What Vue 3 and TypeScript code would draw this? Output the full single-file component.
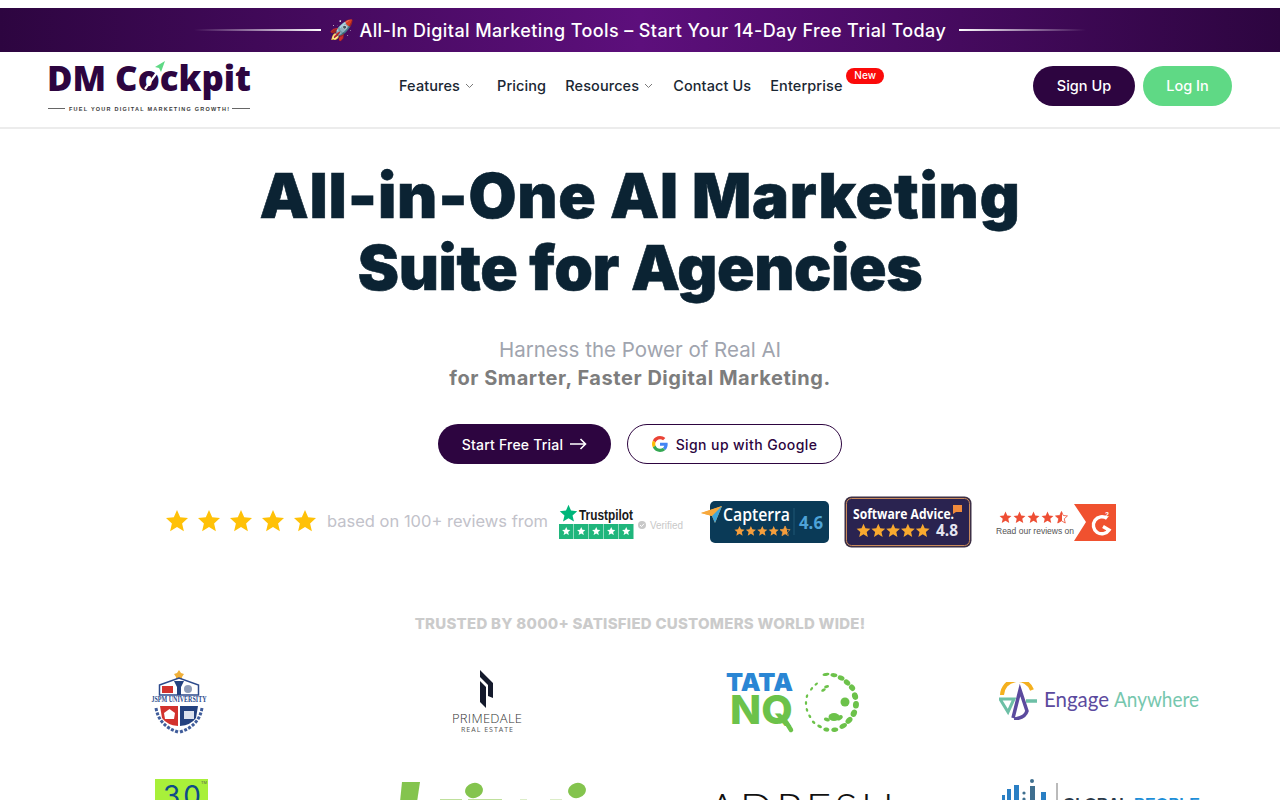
<script setup lang="ts">
interface NavItem {
  label: string
  caret?: boolean
  badge?: string
}

interface Blob {
  a: number
  r: number
  rx: number
  ry: number
}

const navItems: NavItem[] = [
  { label: 'Features', caret: true },
  { label: 'Pricing' },
  { label: 'Resources', caret: true },
  { label: 'Contact Us' },
  { label: 'Enterprise', badge: 'New' },
]

const star = '12,1 15.2,8.3 23,9.1 17.1,14.4 18.9,22.2 12,18.1 5.1,22.2 6.9,14.4 1,9.1 8.8,8.3'
const heroStars = [0, 1, 2, 3, 4]

// spots of the Tata NQ ball, angle from the top, clockwise
const ballBlobs: Blob[] = [
  { a: -10, r: 29, rx: 3.5, ry: 1.5 },
  { a: 6, r: 28, rx: 3.5, ry: 2 },
  { a: 22, r: 27, rx: 3.5, ry: 2.4 },
  { a: 38, r: 26, rx: 3.5, ry: 2.6 },
  { a: 54, r: 26, rx: 3.5, ry: 2.8 },
  { a: 74, r: 25, rx: 3.8, ry: 3 },
  { a: 94, r: 25, rx: 3.8, ry: 3 },
  { a: 114, r: 25, rx: 3.8, ry: 3 },
  { a: 134, r: 25, rx: 4, ry: 2.8 },
  { a: 152, r: 26, rx: 4, ry: 2.4 },
  { a: 172, r: 27, rx: 3.5, ry: 2.2 },
  { a: 190, r: 27, rx: 3, ry: 2 },
  { a: 206, r: 26, rx: 2.5, ry: 1.5 },
  { a: 222, r: 26, rx: 2, ry: 1.3 },
  { a: 238, r: 25, rx: 2, ry: 1.2 },
  { a: 254, r: 25, rx: 2, ry: 1.2 },
  { a: 270, r: 25, rx: 2, ry: 1.2 },
  { a: 286, r: 25, rx: 2, ry: 1.2 },
  { a: 306, r: 24, rx: 2, ry: 1.2 },
  { a: 322, r: 24, rx: 2, ry: 1.2 },
  { a: 150, r: 17, rx: 3.5, ry: 2.2 },
  { a: 194, r: 17, rx: 3, ry: 1.8 },
  { a: 330, r: 15, rx: 2.5, ry: 1.4 },
  { a: 345, r: 17, rx: 2.5, ry: 1.4 },
]

function blobTransform(b: Blob) {
  return `rotate(${b.a} 105 31) translate(105 ${31 - b.r})`
}

function starAt(x: number, y: number, size: number) {
  const s = size / 24
  return `translate(${x} ${y}) scale(${s})`
}
</script>

<template>
  <div class="page">
    <div class="promo">
      <span class="promo-line left"></span>
      <span class="promo-text"><span class="rocket">🚀</span> All-In Digital Marketing Tools – Start Your 14-Day Free Trial Today</span>
      <span class="promo-line right"></span>
    </div>

    <header class="header">
      <svg class="logo" width="204" height="56" viewBox="0 0 204 56">
        <text x="0" y="33" class="logo-word" textLength="204" lengthAdjust="spacingAndGlyphs">DM Cockpit</text>
        <path d="M98 31 L111 13" stroke="#fff" stroke-width="2.2" />
        <path d="M108 9 L118 3 L114 14 L112 10 Z" fill="#5fd985" />
        <path d="M1 50.5 H18 M185 50.5 H203" stroke="#666" stroke-width="1" />
        <text x="22" y="52.5" class="logo-tag" textLength="160" lengthAdjust="spacing">FUEL YOUR DIGITAL MARKETING GROWTH!</text>
      </svg>

      <nav class="nav">
        <a v-for="item in navItems" :key="item.label" class="nav-link">
          {{ item.label }}
          <svg v-if="item.caret" class="caret" width="9" height="6" viewBox="0 0 9 6">
            <path d="M1 1 L4.5 4.5 L8 1" fill="none" stroke="#7a7a7a" stroke-width="1" />
          </svg>
          <span v-if="item.badge" class="badge">{{ item.badge }}</span>
        </a>
      </nav>

      <div class="auth">
        <button class="btn-signup">Sign Up</button>
        <button class="btn-login">Log In</button>
      </div>
    </header>

    <main class="hero">
      <h1><span class="line-one">All-in-One AI Marketing</span><br /><span class="line-two">Suite for Agencies</span></h1>
      <p class="sub-light">Harness the Power of Real AI</p>
      <p class="sub-bold">for Smarter, Faster Digital Marketing.</p>

      <div class="cta">
        <button class="btn-trial">
          Start Free Trial
          <svg width="17" height="12" viewBox="0 0 17 12">
            <path d="M0 6 H15.5 M10.5 1 L15.5 6 L10.5 11" fill="none" stroke="#fff" stroke-width="1.6" />
          </svg>
        </button>
        <button class="btn-google">
          <svg width="16" height="16" viewBox="0 0 48 48">
            <path fill="#EA4335" d="M24 9.5c3.5 0 6.700 1.200 9.200 3.600l6.900-6.900C35.900 2.400 30.500 0 24 0 14.600 0 6.500 5.400 2.600 13.200l8 6.200C12.500 13.600 17.800 9.500 24 9.500z" />
            <path fill="#4285F4" d="M47 24.500c0-1.600-.1-3.100-.4-4.500H24v9h12.900c-.6 3-2.200 5.500-4.700 7.200l7.700 6C44.400 37.500 47 31.600 47 24.500z" />
            <path fill="#FBBC05" d="M10.600 28.600c-.5-1.400-.8-3-.8-4.600s.3-3.200.8-4.600l-8-6.200C.9 16.500 0 20.100 0 24s.9 7.500 2.600 10.800l8-6.200z" />
            <path fill="#34A853" d="M24 48c6.500 0 11.900-2.100 15.900-5.800l-7.700-6c-2.200 1.500-4.900 2.300-8.200 2.300-6.200 0-11.500-4.100-13.400-9.900l-8 6.200C6.500 42.600 14.600 48 24 48z" />
          </svg>
          Sign up with Google
        </button>
      </div>

      <div class="reviews">
        <div class="hero-stars">
          <svg v-for="i in heroStars" :key="i" width="24" height="24" viewBox="0 0 24 24">
            <polygon :points="star" fill="#ffc107" />
          </svg>
        </div>
        <span class="reviews-text">based on 100+ reviews from</span>

        <svg class="trustpilot" width="126" height="36" viewBox="0 0 126 36">
          <polygon :points="star" :transform="starAt(1, 0, 19)" fill="#00b67a" />
          <text x="21" y="15.500" class="tp-word" textLength="54" lengthAdjust="spacingAndGlyphs">Trustpilot</text>
          <g v-for="i in heroStars" :key="i">
            <rect :x="1 + i * 15" y="20" width="14.500" height="15" fill="#1fb67c" />
            <polygon :points="star" :transform="starAt(i * 15 + 3.700, 22.700, 9)" fill="#fff" />
          </g>
          <circle cx="84" cy="21" r="4" fill="#c8c8c8" />
          <path d="M82 21 L83.500 22.500 L86 19.800" fill="none" stroke="#fff" stroke-width="1" />
          <text x="92" y="24.500" class="tp-verified" textLength="33" lengthAdjust="spacingAndGlyphs">Verified</text>
        </svg>

        <svg class="capterra" width="128" height="42" viewBox="0 0 128 42">
          <defs>
            <linearGradient id="cap-half">
              <stop offset="70%" stop-color="#f59e3c" />
              <stop offset="70%" stop-color="#0a3a57" />
            </linearGradient>
            <linearGradient id="g2-half">
              <stop offset="55%" stop-color="#ee4e34" />
              <stop offset="55%" stop-color="#fff" />
            </linearGradient>
          </defs>
          <rect x="9" y="0" width="119" height="42" rx="5" fill="#0a3a57" />
          <polygon points="0,12 21,5 14,22 11,15" fill="#f7a83c" />
          <polygon points="0,12 21,5 11,15" fill="#f7a83c" />
          <polygon points="21,5 14,22 11,15" fill="#3ea6dc" />
          <text x="22" y="20" class="cap-word" textLength="67" lengthAdjust="spacingAndGlyphs">Capterra</text>
          <polygon
            v-for="i in heroStars"
            :key="i"
            :points="star"
            :transform="starAt(33 + i * 11.400, 24.500, 11)"
            :fill="i === 4 ? 'url(#cap-half)' : '#f59e3c'"
            :stroke="i === 4 ? '#f59e3c' : 'none'"
            :stroke-width="i === 4 ? 1.5 : 0"
          />
          <path d="M93 7 V34" stroke="#1f5675" stroke-width="1" />
          <text x="98" y="28" class="cap-score" textLength="24" lengthAdjust="spacingAndGlyphs">4.6</text>
        </svg>

        <svg class="advice" width="128" height="52" viewBox="0 0 128 52">
          <rect x="0.500" y="0.500" width="127" height="51" rx="7" fill="#3c2f45" />
          <rect x="2.500" y="2.500" width="123" height="47" rx="5" fill="#2a2350" stroke="#c98a5c" stroke-width="1" />
          <text x="9" y="23" class="sa-word" textLength="101" lengthAdjust="spacingAndGlyphs">Software Advice.</text>
          <path d="M109 9 H118 V16 H112 L109 18 Z" fill="#f08a3c" />
          <polygon v-for="i in heroStars" :key="i" :points="star" :transform="starAt(12 + i * 14.800, 27, 15)" fill="#f9a92f" />
          <text x="92" y="40" class="sa-score" textLength="22" lengthAdjust="spacingAndGlyphs">4.8</text>
        </svg>

        <svg class="g2" width="121" height="37" viewBox="0 0 121 37">
          <polygon
            v-for="i in heroStars"
            :key="i"
            :points="star"
            :transform="starAt(4 + i * 14, 7, 13)"
            :fill="i === 4 ? 'url(#g2-half)' : '#ee4e34'"
            :stroke="i === 4 ? '#ee4e34' : 'none'"
            :stroke-width="i === 4 ? 1.5 : 0"
          />
          <text x="1" y="29.500" class="g2-text" textLength="78" lengthAdjust="spacingAndGlyphs">Read our reviews on</text>
          <polygon points="79,0 121,0 121,37 79,37 91,18" fill="#f0512f" />
          <path d="M112 14.500 A8.500 8.500 0 1 0 114 26 L108 22.500" fill="none" stroke="#fff" stroke-width="3.400" />
          <text x="110" y="13" class="g2-two">2</text>
        </svg>
      </div>

      <p class="trusted">TRUSTED BY 8000+ SATISFIED CUSTOMERS WORLD WIDE!</p>

      <div class="clients">
        <svg class="client" width="56" height="64" viewBox="0 0 56 64">
          <polygon points="28,0 30,3 33,4 31,7 31,11 25,11 25,7 23,4 26,3" fill="#f0b03a" />
          <path d="M8.500 15 L28 8 L47.500 15 V25 H8.500 Z" fill="#fff" stroke="#2c4a8c" stroke-width="1.500" />
          <rect x="11" y="16" width="11" height="7" fill="#d2322d" />
          <circle cx="37" cy="19" r="4" fill="#8e9cb8" />
          <polygon points="23,11 33,11 30,17 30,25 26,25 26,17" fill="#24427f" />
          <text x="0.500" y="31.500" class="jspm" textLength="55" lengthAdjust="spacingAndGlyphs">JSPM UNIVERSITY</text>
          <path d="M9 36 H27 V56 Q16 55 11 48 Z" fill="#d2322d" />
          <path d="M29 36 H47 L45 48 Q40 55 29 56 Z" fill="#24427f" />
          <polygon points="13,43 18.500,39 24,43 23,49 14,49" fill="#fff" />
          <rect x="33" y="41" width="10" height="8" fill="#dde3ef" />
          <path d="M5 38 Q8 56 27 62 M51 38 Q48 56 29 62" fill="none" stroke="#3f5c9a" stroke-width="3" stroke-dasharray="3 1.500" />
        </svg>

        <svg class="client primedale" width="72" height="64" viewBox="0 0 72 64">
          <polygon points="29,0 42,13 42,28 37,26 37,15 29,7" fill="#141a2c" />
          <polygon points="29,11 35,17 35,38 29,32" fill="#141a2c" />
          <text x="1" y="53" class="prime" textLength="70" lengthAdjust="spacing">PRIMEDALE</text>
          <text x="10" y="62" class="prime-sub" textLength="52" lengthAdjust="spacing">REAL ESTATE</text>
        </svg>

        <svg class="client tata-logo" width="134" height="62" viewBox="0 0 134 62">
          <text x="0" y="19" class="tata" textLength="67" lengthAdjust="spacingAndGlyphs">TATA</text>
          <text x="4" y="52" class="nq" textLength="63" lengthAdjust="spacingAndGlyphs">NQ</text>
          <path d="M60 50 L65 58" stroke="#6cc24a" stroke-width="4.500" stroke-linecap="round" />
          <ellipse
            v-for="(b, i) in ballBlobs"
            :key="i"
            :transform="blobTransform(b)"
            :rx="b.rx"
            :ry="b.ry"
            fill="#6cc24a"
          />
          <circle cx="119" cy="30" r="4.500" fill="#6cc24a" />
          <ellipse cx="108" cy="45" rx="5.500" ry="4" fill="#6cc24a" />
        </svg>

        <svg class="client engage-logo" width="201" height="38" viewBox="0 0 201 38">
          <path d="M3 13 A15.500 15.500 0 0 1 33 8" fill="none" stroke="#f4b01f" stroke-width="4" />
          <path d="M14 36 L21 8 L28 29 Q26 36 15 37" fill="none" stroke="#5b4a9e" stroke-width="3.500" />
          <path d="M1 17 H15 L9 30 Z" fill="none" stroke="#6dbfa6" stroke-width="3" />
          <path d="M27 19 H38" stroke="#6dbfa6" stroke-width="3.500" />
          <text x="45" y="25" class="engage" textLength="65" lengthAdjust="spacingAndGlyphs">Engage</text>
          <text x="115" y="25" class="anywhere" textLength="85" lengthAdjust="spacingAndGlyphs">Anywhere</text>
        </svg>

        <svg class="client thirty-logo" width="54" height="32" viewBox="0 0 54 32">
          <rect x="0" y="0" width="53" height="32" fill="#a8f03a" />
          <text x="8" y="27" class="thirty">30</text>
          <text x="46" y="5" class="tm">TM</text>
        </svg>

        <svg class="client lime-logo" width="192" height="20" viewBox="0 0 192 20">
          <polygon points="4,0 22,0 19,20 2,20" fill="#84c44e" />
          <rect x="42" y="17" width="22" height="3" fill="#bfe09c" />
          <rect x="70" y="17" width="34" height="3" fill="#bfe09c" />
          <rect x="122" y="17" width="7" height="3" fill="#dcedc8" />
          <rect x="152" y="17" width="12" height="3" fill="#dcedc8" />
          <ellipse cx="76" cy="8.500" rx="9" ry="7.500" transform="rotate(-15 76 8.500)" fill="#84c44e" />
          <ellipse cx="179" cy="8.500" rx="9" ry="7.500" transform="rotate(-15 179 8.500)" fill="#84c44e" />
        </svg>

        <svg class="client vr-logo" width="186" height="40" viewBox="0 0 186 40">
          <text x="0" y="32" class="adresh" textLength="186" lengthAdjust="spacing">ADRESH</text>
        </svg>

        <svg class="client global-logo" width="201" height="34" viewBox="0 0 201 34">
          <g fill="#2a7fc4">
            <rect x="3" y="16" width="3" height="18" />
            <rect x="8" y="10" width="4" height="24" />
            <rect x="15" y="6" width="5" height="28" />
          </g>
          <g fill="#3f6f8f">
            <circle cx="25" cy="14" r="1.600" />
            <circle cx="25" cy="20" r="1.600" />
            <circle cx="33" cy="2" r="2" />
            <rect x="31" y="7" width="5" height="27" />
          </g>
          <rect x="42" y="13" width="5" height="21" fill="#2a7fc4" />
          <path d="M58 4 V34" stroke="#777" stroke-width="1" />
          <text x="64" y="30.500" class="global" textLength="66" lengthAdjust="spacing">GLOBAL</text>
          <text x="135" y="30.500" class="people" textLength="66" lengthAdjust="spacing">PEOPLE</text>
        </svg>
      </div>
    </main>
  </div>
</template>

<style>
html, body {
  margin: 0;
  background: #fff;
  overflow: hidden;
}
</style>

<style scoped>
.page {
  height: 800px;
  overflow: hidden;
  padding-top: 8px;
  box-sizing: border-box;
  font-family: Inter, "Open Sans", sans-serif;
}
.promo {
  height: 44px;
  display: flex;
  align-items: center;
  justify-content: center;
  background: linear-gradient(90deg, #2d0540 0%, #5d0f7c 50%, #2d0540 100%);
}
.promo-text {
  margin: 0 13px 0 8px;
  color: #fff;
  font-size: 18px;
  font-weight: 500;
  letter-spacing: 0.4px;
}
.rocket { font-size: 20px; line-height: 1; }
.promo-line {
  width: 127px;
  height: 2px;
}
.promo-line.left { background: linear-gradient(90deg, transparent, #fff); }
.promo-line.right { background: linear-gradient(90deg, #fff, transparent); }

.header {
  box-sizing: border-box;
  height: 77px;
  display: flex;
  align-items: center;
  padding: 0 48px 7px 47px;
  border-bottom: 2px solid #ececec;
}
.logo {
  flex: none;
}
.logo-word {
  font-family: "Open Sans", sans-serif;
  font-weight: 800;
  font-size: 36px;
  fill: #2d0540;
}
.logo-tag {
  font-family: "Liberation Sans", sans-serif;
  font-weight: 700;
  font-size: 5.500px;
  fill: #3a3a3a;
}
.nav {
  display: flex;
  align-items: center;
  gap: 19px;
  margin: 0 0 2px 148px;
}
.nav-link {
  position: relative;
  display: flex;
  align-items: center;
  gap: 5px;
  font-size: 14.500px;
  letter-spacing: 0.1px;
  font-weight: 500;
  color: #1a2733;
  white-space: nowrap;
}
.caret { margin: 2px 1px 0 0; }
.nav-link:first-child .caret { margin-right: 4px; }
.badge {
  position: absolute;
  left: 76px;
  top: -9px;
  width: 38px;
  height: 16px;
  line-height: 15px;
  text-align: center;
  border-radius: 8px;
  background: #fb0a0a;
  color: #fff;
  font-size: 10px;
}
.auth {
  display: flex;
  gap: 8px;
  margin-left: auto;
}
.auth button {
  height: 40px;
  border: 0;
  border-radius: 20px;
  color: #fff;
  font-family: inherit;
  font-size: 14.500px;
  font-weight: 500;
  padding: 0 0 1px;
}
.btn-signup { width: 102px; background: #2d0540; }
.btn-login { width: 89px; background: #5fd985; }

.hero {
  display: flex;
  flex-direction: column;
  align-items: center;
  padding-top: 31px;
}
h1 {
  margin: 0;
  font-size: 62px;
  line-height: 72px;
  font-weight: 900;
  color: #0b2333;
  text-align: center;
  -webkit-text-stroke: 0.6px #0b2333;
}
.line-one { letter-spacing: 0.8px; }
.line-two { letter-spacing: -0.4px; }
.sub-light {
  margin: 32px 0 0;
  font-size: 20.500px;
  line-height: 28px;
  color: #a0a4ae;
}
.sub-bold {
  margin: 0;
  font-size: 20px;
  letter-spacing: 0.55px;
  line-height: 28px;
  font-weight: 700;
  color: #7d7d7d;
}
.cta {
  display: flex;
  gap: 16px;
  margin-top: 32px;
}
.cta button {
  height: 40px;
  border-radius: 20px;
  font-family: inherit;
  font-size: 14px;
  font-weight: 500;
  display: flex;
  align-items: center;
  justify-content: center;
  box-sizing: border-box;
}
.btn-trial {
  width: 173px;
  gap: 7px;
  border: 0;
  background: #2d0540;
  color: #fff;
  letter-spacing: 0.2px;
}
.btn-google {
  width: 215px;
  gap: 8px;
  background: #fff;
  border: 1px solid #2d0540;
  color: #2d0540;
  letter-spacing: 0.4px;
}
.reviews {
  display: flex;
  align-items: center;
  margin-top: 32px;
  height: 52px;
  width: 1280px;
  padding-left: 165px;
  box-sizing: border-box;
}
.hero-stars {
  display: flex;
  gap: 8px;
  margin-bottom: 2px;
}
.reviews-text {
  margin: 0 0 2px 10px;
  font-size: 16.500px;
  color: #c2c2ca;
  white-space: nowrap;
}
.trustpilot { margin-left: 10px; flex: none; }
.capterra { margin-left: 17px; flex: none; }
.advice { margin-left: 15px; flex: none; }
.g2 { margin-left: 23px; flex: none; }
.tp-word {
  font-family: "Liberation Sans", sans-serif;
  font-size: 15px;
  font-weight: 700;
  fill: #1a1a1a;
}
.tp-verified {
  font-family: "Liberation Sans", sans-serif;
  font-size: 10px;
  fill: #c8c8c8;
}
.cap-word {
  font-family: "Open Sans", sans-serif;
  font-size: 18px;
  font-weight: 600;
  fill: #fff;
}
.cap-score {
  font-family: "Open Sans", sans-serif;
  font-size: 18px;
  font-weight: 700;
  fill: #4ea3d8;
}
.sa-word {
  font-family: "Open Sans", sans-serif;
  font-size: 14px;
  font-weight: 700;
  fill: #fff;
}
.sa-score {
  font-family: "Open Sans", sans-serif;
  font-size: 16px;
  font-weight: 700;
  fill: #e4e4f0;
}
.g2-text {
  font-family: "Liberation Sans", sans-serif;
  font-size: 9px;
  fill: #555;
}
.g2-two {
  font-family: "Liberation Sans", sans-serif;
  font-size: 7px;
  font-weight: 700;
  fill: #fff;
}
.trusted {
  margin: 66px 0 0;
  font-size: 15px;
  letter-spacing: 0.25px;
  line-height: 20px;
  font-weight: 800;
  color: #cbcbcb;
}
.clients {
  display: grid;
  grid-template-columns: repeat(4, 307px);
  grid-auto-rows: 109px;
  justify-items: center;
  align-items: start;
  margin-top: 36px;
  width: 1280px;
  padding-left: 25px;
  box-sizing: border-box;
}
.client { display: block; overflow: hidden; }
.primedale { margin-left: 3px; }
.tata-logo { margin-top: 2px; }
.engage-logo { margin-top: 12px; }
.thirty-logo { margin-left: 6px; }
.lime-logo { margin: 3px 0 0 17px; }
.vr-logo { margin: 14px 0 0 16px; }
.jspm {
  font-family: "Liberation Serif", serif;
  font-size: 8px;
  font-weight: 700;
  fill: #2c4a8c;
}
.prime {
  font-family: "Open Sans", sans-serif;
  font-size: 13px;
  font-weight: 300;
  fill: #333;
}
.prime-sub {
  font-family: "Open Sans", sans-serif;
  font-size: 7px;
  fill: #555;
}
.tata {
  font-family: Inter, sans-serif;
  font-size: 25px;
  font-weight: 900;
  fill: #2a86d4;
}
.nq {
  font-family: Inter, sans-serif;
  font-size: 40px;
  font-weight: 800;
  fill: #6cc24a;
}
.engage {
  font-family: Lato, sans-serif;
  font-size: 21px;
  fill: #5b4a9e;
}
.anywhere {
  font-family: Lato, sans-serif;
  font-size: 21px;
  fill: #76c7ae;
}
.thirty {
  font-family: Inter, sans-serif;
  font-size: 28px;
  letter-spacing: 3px;
  fill: #0d4a8a;
}
.tm {
  font-family: "Liberation Sans", sans-serif;
  font-size: 4px;
  fill: #555;
}
.adresh {
  font-family: Lato, sans-serif;
  font-weight: 300;
  font-size: 44px;
  fill: #111;
}
.global {
  font-family: "Liberation Sans", sans-serif;
  font-size: 16px;
  font-weight: 700;
  fill: #2b3a4a;
}
.people {
  font-family: "Liberation Sans", sans-serif;
  font-size: 16px;
  font-weight: 700;
  fill: #1f8fd8;
}
</style>
